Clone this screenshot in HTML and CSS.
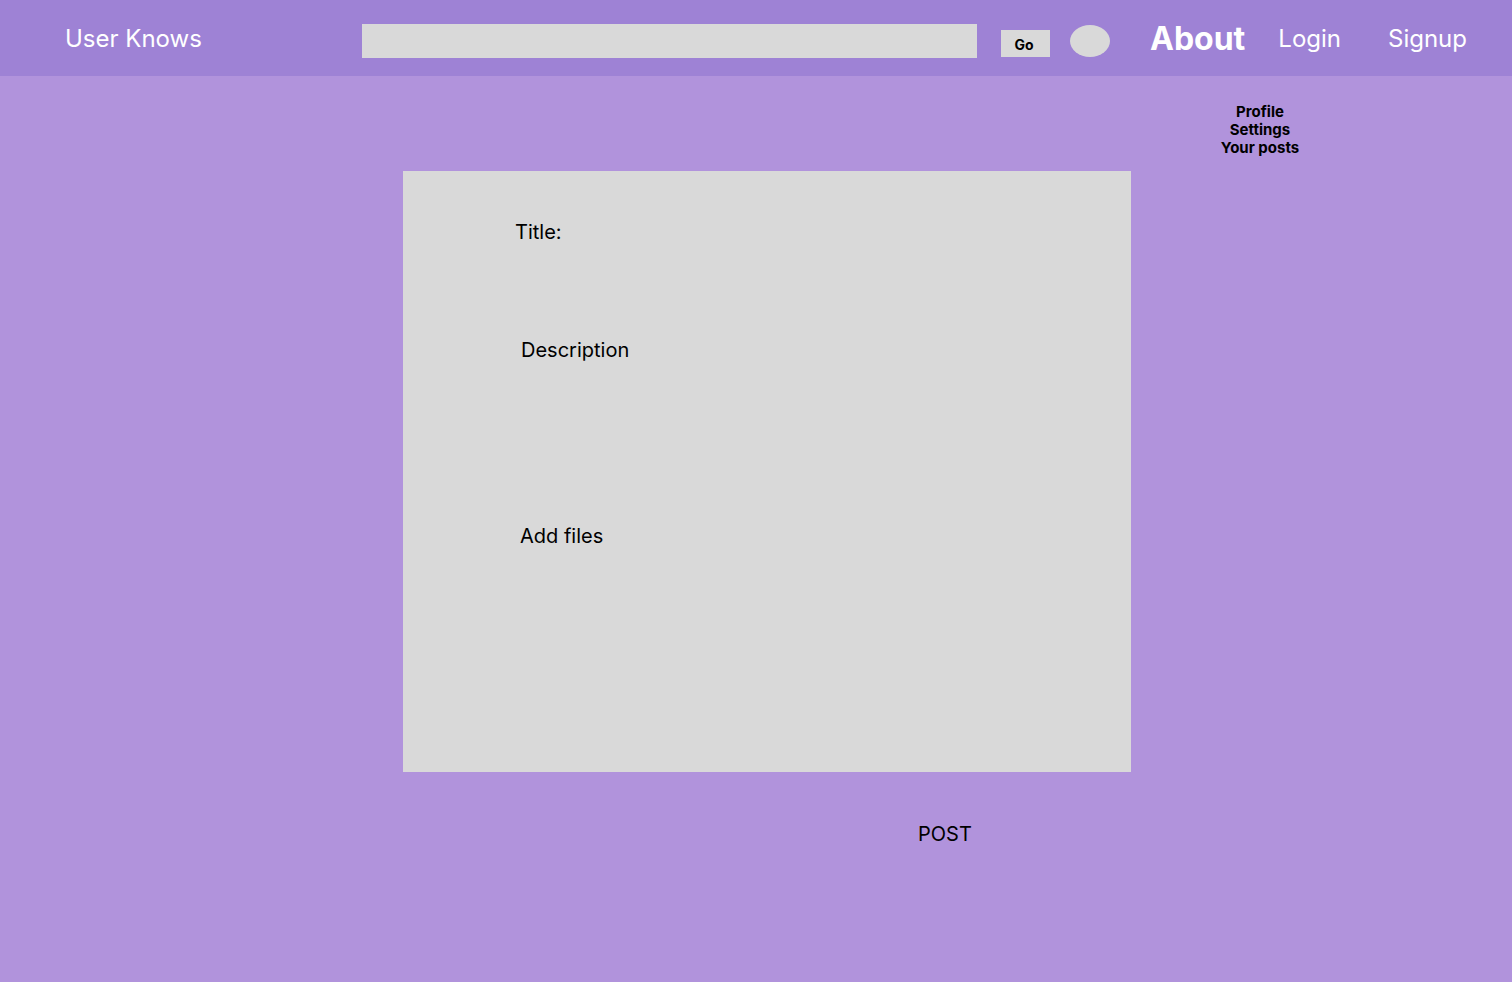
FILE: index.html
```html
<!DOCTYPE html>
<html>
<head>
<meta charset="utf-8">
<link rel="stylesheet" href="styles.css">
</head>
<body>
<header class="topbar">
  <div class="brand">User Knows</div>
  <div class="search"></div>
  <button class="go">Go</button>
  <div class="avatar"></div>
  <a class="about">About</a>
  <a class="login">Login</a>
  <a class="signup">Signup</a>
</header>
<main class="page">
  <div class="menu-row">
    <ul class="menu">
      <li>Profile</li>
      <li>Settings</li>
      <li>Your posts</li>
    </ul>
  </div>
  <section class="card">
    <div class="label label-title">Title:</div>
    <div class="label label-desc">Description</div>
    <div class="label label-files">Add files</div>
  </section>
  <div class="post">POST</div>
</main>
</body>
</html>
```

FILE: styles.css
```css
* { box-sizing: border-box; }
html, body { margin: 0; padding: 0; }
body {
  background: #b193dc;
  font-family: "Inter", "Noto Sans", sans-serif;
  color: #000;
  min-height: 982px;
}
.topbar {
  height: 76px;
  background: #9e82d5;
  display: flex;
  align-items: flex-start;
  padding-left: 65px;
}
.brand {
  color: #fff;
  font-size: 24px;
  line-height: 29px;
  margin-top: 24px;
  width: 137px;
  white-space: nowrap;
}
.search {
  margin-left: 160px;
  margin-top: 24px;
  width: 615px;
  height: 34px;
  background: #d9d9d9;
}
.go {
  margin-left: 24px;
  margin-top: 30px;
  width: 49px;
  height: 27px;
  background: #d9d9d9;
  border: none;
  padding: 0;
  font-family: "Inter", sans-serif;
  font-weight: 700;
  font-size: 14px;
  color: #000;
  padding-top: 2px;
  padding-right: 3px;
}
.avatar {
  margin-left: 20px;
  margin-top: 25px;
  width: 40px;
  height: 32px;
  border-radius: 50%;
  background: #d9d9d9;
}
.about, .login, .signup {
  color: #fff;
  white-space: nowrap;
}
.about {
  margin-left: 40px;
  margin-top: 19px;
  font-size: 32px;
  line-height: 39px;
  font-weight: 700;
}
.login {
  margin-left: 33px;
  margin-top: 24px;
  font-size: 24px;
  line-height: 29px;
}
.signup {
  margin-left: 47px;
  margin-top: 24px;
  font-size: 24px;
  line-height: 29px;
}
.page {
  padding-top: 27px;
}
.menu-row {
  display: flex;
  justify-content: flex-end;
  padding-right: 192px;
}
.menu {
  list-style: none;
  margin: 0;
  padding: 0;
  width: 120px;
  text-align: center;
  font-weight: 700;
  font-size: 15px;
  line-height: 18px;
}
.card {
  margin-top: 14px;
  margin-left: 403px;
  width: 728px;
  height: 601px;
  background: #d9d9d9;
  padding-top: 49px;
}
.label {
  font-size: 20px;
  line-height: 24px;
}
.label-title { margin-left: 112px; }
.label-desc { margin-left: 118px; margin-top: 94px; }
.label-files { margin-left: 117px; margin-top: 162px; }
.post {
  margin-top: 50px;
  margin-left: 918px;
  font-size: 20px;
  line-height: 24px;
}
```
